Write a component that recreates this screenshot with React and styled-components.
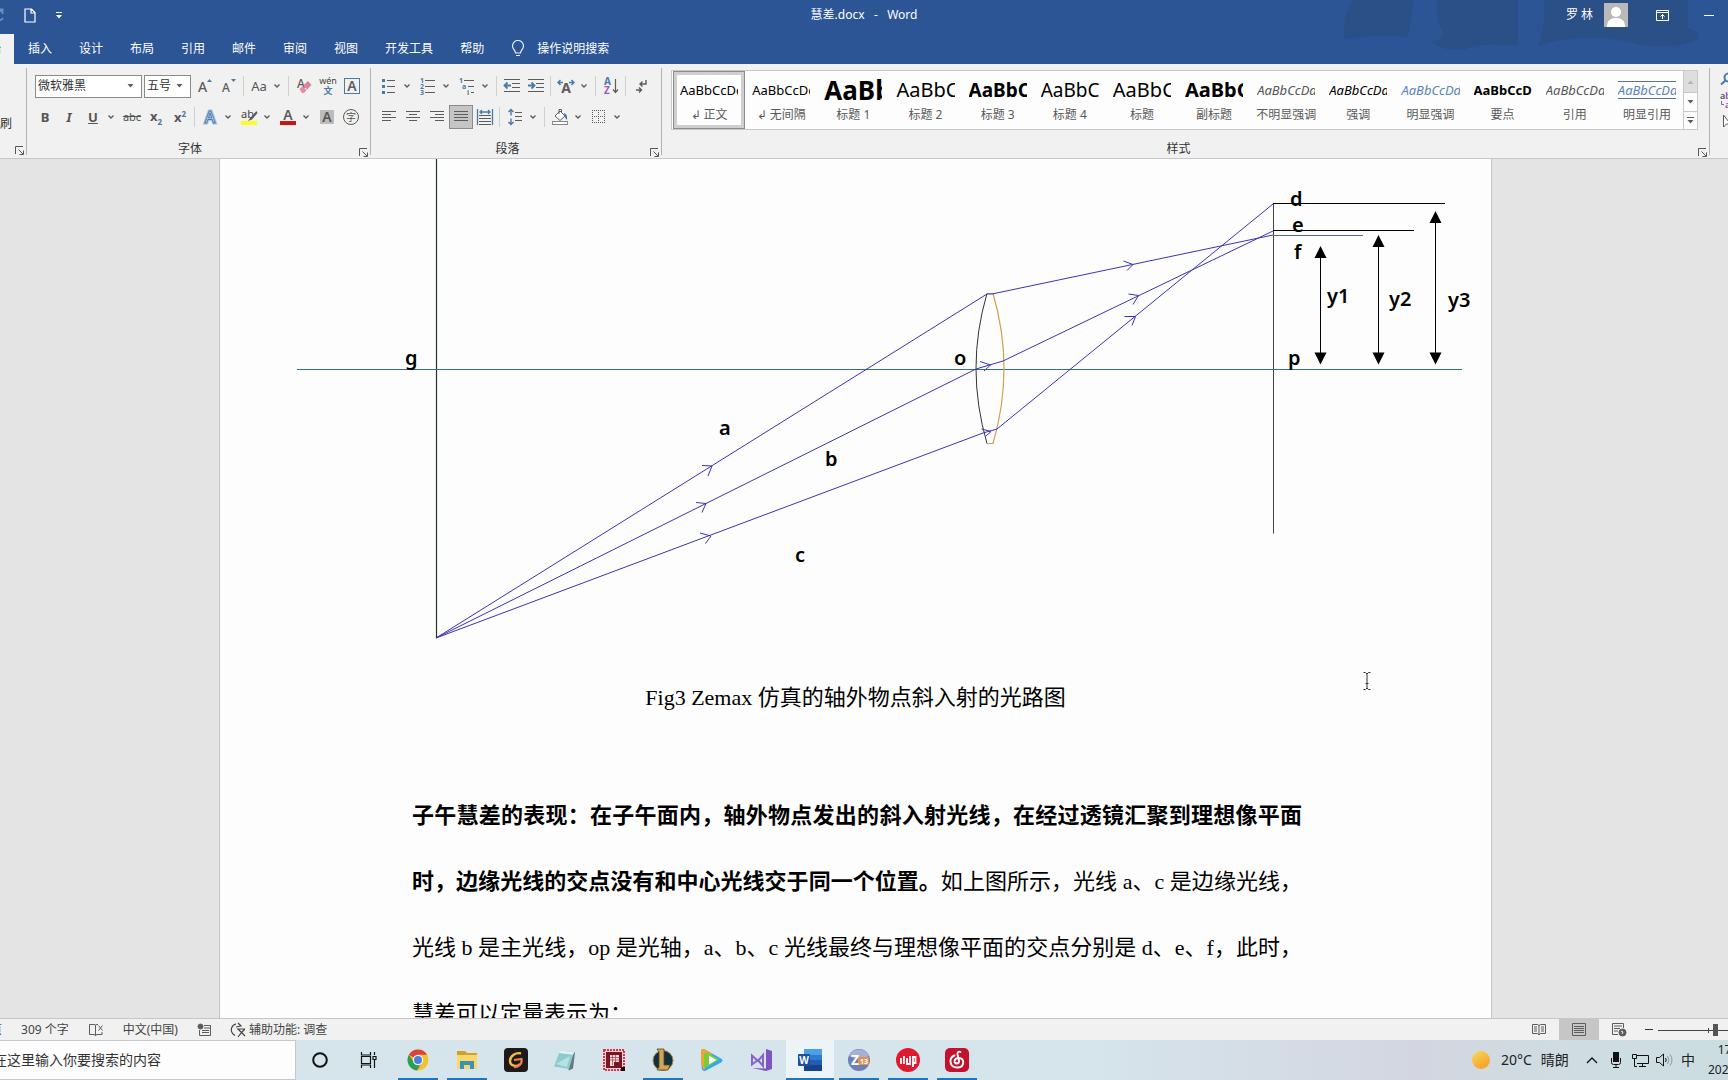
import styled, { createGlobalStyle } from 'styled-components'

const blue = '#4a7ba6'
const grey = '#5c5c5c'

const tabs = ['插入', '设计', '布局', '引用', '邮件', '审阅', '视图', '开发工具', '帮助']

const wordStyles = [
  { name: '↲ 正文', sample: 'AaBbCcDd', size: 13, active: true },
  { name: '↲ 无间隔', sample: 'AaBbCcDd', size: 13 },
  { name: '标题 1', sample: 'AaBbC', size: 26, bold: true },
  { name: '标题 2', sample: 'AaBbCc', size: 20 },
  { name: '标题 3', sample: 'AaBbCc', size: 19, bold: true },
  { name: '标题 4', sample: 'AaBbC', size: 19 },
  { name: '标题', sample: 'AaBbCc', size: 20 },
  { name: '副标题', sample: 'AaBbCc', size: 20, bold: true },
  { name: '不明显强调', sample: 'AaBbCcDd', size: 13, italic: true, color: '#555' },
  { name: '强调', sample: 'AaBbCcDd', size: 13, italic: true },
  { name: '明显强调', sample: 'AaBbCcDd', size: 13, italic: true, color: '#5b84b5' },
  { name: '要点', sample: 'AaBbCcD', size: 13, bold: true },
  { name: '引用', sample: 'AaBbCcDd', size: 13, italic: true, color: '#555' },
  { name: '明显引用', sample: 'AaBbCcDd', size: 13, italic: true, color: '#5b84b5', ruled: true },
]

/////  Icons  /////

const Chevron = () => (
  <svg width="8" height="6" viewBox="0 0 8 6" fill="none" stroke={grey} strokeWidth="1.4">
    <path d="M1.5 1.5 4 4l2.500-2.500" />
  </svg>
)

const Triangle = ({ color = grey, up }) => (
  <svg width="7" height="4" viewBox="0 0 7 4" fill={color}>
    <path d={up ? 'M.5 4h6L3.500.5z' : 'M.5 0h6L3.500 3.500z'} />
  </svg>
)

const Launcher = () => (
  <svg width="9" height="9" viewBox="0 0 9 9" fill="none" stroke="#555">
    <path d="M.5 8V.5H8M3.500 3.500 8 8M8.500 4.500v4h-4" />
  </svg>
)

const Lines = ({ rows, x = 0 }) => (
  <svg width="16" height="14" viewBox="0 0 16 14" stroke={grey}>
    {rows.map(([a, b], i) => (
      <path key={i} d={`M${a + x} ${i * 3 + 1.500}H${b + x}`} />
    ))}
  </svg>
)

const GrowFont = ({ down }) => (
  <svg width="18" height="18" viewBox="0 0 18 18">
    <text x="2" y="15" fontSize={down ? 12 : 14} fontWeight="500" fill={grey}>A</text>
    {down ? <path d="M11 2h5l-2.500 3z" fill={blue} /> : <path d="M11 5h5l-2.500-3z" fill={blue} />}
  </svg>
)

const Eraser = () => (
  <svg width="18" height="18" viewBox="0 0 18 18">
    <text x="2" y="11" fontSize="12" fontWeight="500" fill={grey}>A</text>
    <path d="m4.500 12 3-2.700 4 4-2.500 2.700H7z" fill="#e58ba0" />
    <path d="m8.500 8.300 4.500-4.300 3.500 4-4.500 4.500z" fill="#e07f97" />
  </svg>
)

const Wen = () => (
  <svg width="20" height="20" viewBox="0 0 20 20" textAnchor="middle">
    <text x="10" y="8" fontSize="9" fill="#444">wén</text>
    <text x="10" y="18" fontSize="9" fontWeight="700" fill={blue}>文</text>
  </svg>
)

const BoxedA = () => (
  <svg width="18" height="18" viewBox="0 0 18 18">
    <rect x="1.500" y="1.500" width="15" height="15" fill="none" stroke={blue} />
    <text x="9" y="14" fontSize="14" fontWeight="600" textAnchor="middle" fill={grey}>A</text>
  </svg>
)

const ShadedA = () => (
  <svg width="18" height="18" viewBox="0 0 18 18">
    <rect x="2" y="2" width="14" height="14" fill="#bcbcbc" />
    <text x="9" y="14" fontSize="14" fontWeight="600" textAnchor="middle" fill="#555">A</text>
  </svg>
)

const CircledChar = () => (
  <svg width="18" height="18" viewBox="0 0 18 18">
    <circle cx="9" cy="9" r="7.500" fill="none" stroke={grey} />
    <text x="9" y="13" fontSize="10" textAnchor="middle" fill="#555">字</text>
  </svg>
)

const TextEffect = () => (
  <svg width="18" height="18" viewBox="0 0 18 18">
    <text x="9" y="15" fontSize="16" fontWeight="500" textAnchor="middle" fill="#fff" stroke="#a9c9ea" strokeWidth="3">A</text>
    <text x="9" y="15" fontSize="16" fontWeight="500" textAnchor="middle" fill="#fff" stroke={blue} strokeWidth="1">A</text>
  </svg>
)

const Highlight = () => (
  <svg width="18" height="18" viewBox="0 0 18 18">
    <text x="1" y="10" fontSize="11" fill="#444">ab</text>
    <path d="m16.500 3-6 6.500-2.500 3.500 4-1.500 5.500-6.500z" fill={grey} />
    <path d="M1 13h16v4H1z" fill="#fdfd20" />
  </svg>
)

const FontColor = () => (
  <svg width="18" height="18" viewBox="0 0 18 18">
    <text x="9" y="12" fontSize="14" fontWeight="600" textAnchor="middle" fill={grey}>A</text>
    <path d="M1 13h16v4H1z" fill="#c4161c" />
  </svg>
)

const Bullets = () => (
  <svg width="16" height="16" viewBox="0 0 16 16">
    <path d="M6 2.500h8M6 8.500h8M6 14.500h8" stroke={grey} />
    <path d="M1 1h3v3H1zM1 7h3v3H1zM1 13h3v3H1z" fill={blue} />
  </svg>
)

const Numbers = () => (
  <svg width="18" height="18" viewBox="0 0 18 18">
    <path d="M6 3.500h10M6 9.500h10M6 15.500h10" stroke={grey} />
    <g fontSize="7" fontWeight="700" fill={blue}>
      <text x="1" y="6">1</text>
      <text x="1" y="12">2</text>
      <text x="1" y="18">3</text>
    </g>
  </svg>
)

const Multilevel = () => (
  <svg width="18" height="18" viewBox="0 0 18 18">
    <path d="M6 3.500h10M10 9.500h6M13 15.500h3" stroke={grey} />
    <g fontSize="7" fontWeight="700" fill={blue}>
      <text x="1" y="6">1</text>
      <text x="4" y="12">a</text>
      <text x="9" y="18">i</text>
    </g>
  </svg>
)

const Indent = ({ right }) => (
  <svg width="18" height="16" viewBox="0 0 18 16" fill="none">
    <path d="M1 1.500h16M9 5.500h8M9 9.500h8M1 13.500h16" stroke={grey} />
    <path d={right ? 'M1 7.500h6M4.500 4.500l3 3-3 3' : 'M8 7.500H2M4.500 4.500l-3 3 3 3'} stroke={blue} strokeWidth="1.800" />
  </svg>
)

const AsianLayout = () => (
  <svg width="18" height="18" viewBox="0 0 18 18" fill="none">
    <text x="9" y="16" fontSize="14" fontWeight="700" textAnchor="middle" fill={grey}>A</text>
    <path d="M1 5.500h5M3.500 3 1 5.500 3.500 8M17 5.500h-5M14.500 3 17 5.500 14.500 8" stroke={blue} strokeWidth="1.500" />
  </svg>
)

const Sort = () => (
  <svg width="16" height="18" viewBox="0 0 16 18" fill="none">
    <g fontSize="10" fontWeight="700">
      <text x="1" y="8" fill={blue}>A</text>
      <text x="1" y="17" fill="#9a5bb0">Z</text>
    </g>
    <path d="M12.500 2v13M10 12.500l2.500 3 2.500-3" stroke={grey} strokeWidth="1.200" />
  </svg>
)

const Marks = () => (
  <svg width="14" height="16" viewBox="0 0 14 16" fill="none" stroke={grey} strokeWidth="1.400">
    <path d="M12 2v4H6M8.500 3.500 6 6l2.500 2.500M2 12h5M5 9.500 7.500 12 5 14.500" />
  </svg>
)

const Distribute = () => (
  <svg width="18" height="18" viewBox="0 0 18 18" fill="none">
    <path d="M3 7.500h12M3 10.500h12M3 13.500h12M3 16.500h12" stroke={grey} />
    <path d="M1.500 1v16M16.500 1v16M4 4h10M6 2 4 4l2 2M12 2l2 2-2 2" stroke={blue} strokeWidth="1.300" />
  </svg>
)

const LineSpacing = () => (
  <svg width="16" height="18" viewBox="0 0 16 18" fill="none">
    <path d="M8 4.500h7M8 8.500h7M8 12.500h7" stroke={grey} />
    <path d="M4 1.500v6M1.500 4 4 1.500 6.500 4M4 10.500v6M1.500 14 4 16.500 6.500 14" stroke={blue} strokeWidth="1.400" />
  </svg>
)

const Bucket = () => (
  <svg width="18" height="18" viewBox="0 0 18 18" fill="none">
    <path d="m4 8 5-5 5 5-5 4.500zM8 6V1.500h2.500V5" stroke={grey} fill="#fff" />
    <path d="M13 5c3 1 3.500 4 3 7-1.500-1-2-3-2.500-4z" fill={blue} />
    <rect x="1.500" y="13.500" width="15" height="3" stroke="#888" fill="#fff" />
  </svg>
)

const Borders = () => (
  <svg width="14" height="14" viewBox="0 0 14 14" fill="none" stroke={grey} strokeDasharray="1 1">
    <path d="M0 .5h14M0 6.500h14M0 12.500h14M.5 0v14M6.500 0v14M12.500 0v14" />
  </svg>
)

const Bulb = () => (
  <svg width="14" height="18" viewBox="0 0 14 18" fill="none" stroke="#e8f1f8" strokeWidth="1.200">
    <path d="M4.500 13c0-3-3-3.500-3-7a5.500 5.500 0 0 1 11 0c0 3.500-3 4-3 7zM5 15.500h4" />
  </svg>
)

/////  Optical diagram  /////

const rays = [
  'M436 638 987 294h5L1273 235',
  'M436 638 976 369l27-8L1273 231',
  'M436 638 983 433l14-4L1273 204',
]

const arrowHeads = [
  'M702 465.500 712 466l-4 10',
  'M696 502.500 706 503.500l-4 9',
  'M700 533l11 3-5.500 7.500',
  'M980 361.500 990.500 365 984 371',
  'M981.500 429 991 431.500 986 436',
  'M1123.500 261 1133 264.500 1127 270.500',
  'M1128.500 294 1138.500 295.500 1133 304.500',
  'M1124.500 316.500h11l-3.500 9',
]

const labels = [
  ['g', 405, 365], ['a', 719, 435], ['b', 825, 466], ['c', 795, 562], ['o', 954, 365],
  ['d', 1290, 206], ['e', 1292, 232], ['f', 1294, 259], ['p', 1288, 365],
  ['y1', 1327, 303], ['y2', 1389, 306], ['y3', 1448, 307],
]

const heights = [[1320.500, 246], [1378.500, 235], [1435.500, 211]]

const Diagram = () => (
  <DiagramSvg viewBox="220 159 1271 506" role="img" aria-label="光路图">
    <g fill="none">
      <path d="M436.500 159V638" stroke="#263238" strokeWidth="1.200" />
      <path d="M1273.500 203.500V533.500" stroke="#444" />
      <path d="M297 369.500H1462" stroke="#3c6e80" />
      <path d="M1273 203.500h172M1273 230.500h141" stroke="#000" strokeWidth="1.200" />
      <path d="M1273 235.500h90" stroke="#566b8c" />
      <path d="M987 293.500Q965 368 987 443.500" stroke="#333" />
      <path d="M987 293.500h6Q1015 368 993 443.500h-6" stroke="#c9a24e" strokeWidth="1.200" />
      <g stroke="#3a34b4">
        {rays.map(d => <path key={d} d={d} />)}
        {arrowHeads.map(d => <path key={d} d={d} />)}
      </g>
    </g>
    {heights.map(([x, top]) => (
      <g key={x}>
        <path d={`M${x} ${top + 8}V356`} stroke="#000" />
        <path d={`M${x} ${top}l6 12h-12zM${x} 364.500l6-12h-12z`} />
      </g>
    ))}
    {labels.map(([text, x, y]) => <text key={text} x={x} y={y}>{text}</text>)}
  </DiagramSvg>
)

/////  Taskbar icons  /////

const AppIcon = ({ children }) => (
  <svg width="24" height="24" viewBox="0 0 24 24">{children}</svg>
)

const apps = [
  { label: 'Cortana', icon: <circle cx="12" cy="12" r="6.800" fill="none" stroke="#111" strokeWidth="2" /> },
  {
    label: '任务视图',
    icon: <path d="M4.500 4v3h9V4M4.500 20v-3h9v3M4.500 8.500h9v7h-9zM17.500 4v3M17.500 12v8M16 8.500h3v3h-3z" fill="none" stroke="#111" strokeWidth="1.200" />,
  },
  {
    label: 'Chrome',
    open: true,
    icon: (
      <>
        <circle cx="12" cy="12" r="10.500" fill="#f2c230" />
        <path d="M12 12 2.900 6.800A10.500 10.500 0 0 1 21.100 6.800H12z" fill="#d9453a" />
        <path d="M2.900 6.800A10.500 10.500 0 0 0 11 22.500L16 14 8 14z" fill="#2f9c53" />
        <circle cx="12" cy="12" r="5.200" fill="#f3f6f4" />
        <circle cx="12" cy="12" r="4" fill="#4a80d8" />
      </>
    ),
  },
  {
    label: '文件资源管理器',
    open: true,
    icon: (
      <>
        <path d="M2 3h8l2 2h10v4H2z" fill="#d49e2a" />
        <path d="M2 7h20v14H2z" fill="#fbd768" />
        <path d="M5 13h14v8h-4v-4H9v4H5z" fill="#3a92b8" />
      </>
    ),
  },
  {
    label: 'G',
    icon: (
      <>
        <rect width="24" height="24" rx="4" fill="#1e1a1b" />
        <path d="M17 5.500C12 4 6 8 6 13c0 5 7 6.500 10 3" fill="none" stroke="#f3bf45" strokeWidth="2.400" />
        <path d="M10 12l7.500-1c1 5-3 8.500-7.500 8" fill="none" stroke="#ee7f49" strokeWidth="2.200" />
      </>
    ),
  },
  {
    label: '记事本',
    icon: (
      <>
        <path d="m7 3 15 1.500-2 16-4 2z" fill="#66777d" />
        <path d="M7 2.500 21 4l-5 17L1 18.500z" fill="#8ccbd0" />
        <path d="M7 2.500 21 4l-.8 2.800L5.800 5z" fill="#e2f1f2" />
        <path d="m3 16 14-8-3 11z" fill="#b9e0e2" />
      </>
    ),
  },
  {
    label: 'P',
    icon: (
      <>
        <path d="M1 1h22v22H1z" fill="#f5d6d9" />
        <path d="M2 2h20v20H2z" fill="none" stroke="#d23a4c" strokeWidth="2" strokeDasharray="2 1" />
        <path d="M4 4h16v16H4z" fill="#7d1521" />
        <path d="M8 7h9v7h-5v4H8z" fill="#f6dcdd" />
        <path d="M8 9.500h9M8 12h9M10.500 7v10M13.500 7v7" stroke="#a83a45" strokeWidth=".7" />
        <path d="M19 19h4v4h-4z" fill="#240508" />
      </>
    ),
  },
  {
    label: '英雄联盟',
    open: true,
    icon: (
      <>
        <circle cx="12" cy="12.500" r="10" fill="#12303d" stroke="#a68a4a" />
        <path d="M6 1h7v16h6l-2 5H6l2-3V4z" fill="#cda755" stroke="#5a4420" strokeWidth=".8" />
      </>
    ),
  },
  {
    label: '腾讯视频',
    icon: (
      <>
        <path d="M1 4c0-3 2-3.500 4-2.500l16 9c2 1 2 3 0 4l-15 8C3 24 2 22 1.700 20z" fill="#36a7ee" />
        <path d="M1 4c0-3 2-3.500 4-2.500l7 4L4 22C2 21 1 12 1 4z" fill="#f5a32f" />
        <path d="M4 7c0-2 2-3 4-2l11 6.500L7 19c-2 1-3-1-3-3z" fill="#73cf38" />
        <path d="m9 7.500 7.500 4.500L9 16.500z" fill="#fff" />
      </>
    ),
  },
  {
    label: 'Visual Studio',
    icon: (
      <>
        <path d="m17 1 6 2v18l-6 2-14-3 14 .5z" fill="#7d55c0" />
        <path d="M3 7.500 9 13l5-6v11l-5-6-6 4.500z" fill="none" stroke="#8a63c9" strokeWidth="2" />
      </>
    ),
  },
  {
    label: 'Word',
    open: true,
    active: true,
    icon: (
      <>
        <path d="M6 1h18v6H6z" fill="#4ba0e8" />
        <path d="M6 7h18v5H6z" fill="#2f7bd0" />
        <path d="M6 12h18v5H6z" fill="#1f5fb5" />
        <path d="M6 17h18v6H6z" fill="#17438c" />
        <rect y="6" width="12" height="12" rx="1" fill="#1c4f9e" />
        <text x="6" y="16" fontSize="10" fontWeight="700" fill="#fff" textAnchor="middle">W</text>
      </>
    ),
  },
  {
    label: 'Zemax',
    open: true,
    icon: (
      <>
        <circle cx="12" cy="12" r="11" fill="#6e7fb8" />
        <path d="M2 8a11 11 0 0 1 20 0c-6 3-14 3-20 0z" fill="#a4b2d8" />
        <path d="M11 9h11v8H11z" fill="#e2934f" />
        <text x="8" y="17" fontSize="14" fontWeight="700" fill="#fff" textAnchor="middle">Z</text>
        <text x="17" y="16" fontSize="7" fontWeight="700" fill="#fff" textAnchor="middle">13</text>
      </>
    ),
  },
  {
    label: '录屏',
    open: true,
    icon: (
      <>
        <circle cx="12" cy="12" r="12" fill="#df1930" />
        <path d="M5 10v6M8 8v8M11 10v6h3v-8M17 8v11M17 9h2.500v6H17" fill="none" stroke="#fff" strokeWidth="1.800" />
      </>
    ),
  },
  {
    label: '网易云音乐',
    open: true,
    icon: (
      <>
        <rect width="24" height="24" rx="5" fill="#c4122c" />
        <path d="M15.500 4c-2-1-3.500.5-3 2.500l1.500 6c.5 2-1 3-2.200 3-3.300 0-3.300-5.500 2.200-5.500 6 0 5.500 9-1 9.500C4 20 3.500 10 9.500 7.500" fill="none" stroke="#fff" strokeWidth="1.900" strokeLinecap="round" />
      </>
    ),
  },
]

/////  Parts  /////

const Tool = ({ label, menu, pressed, children }) => (
  <ToolWrap $menu={menu}>
    <ToolButton aria-label={label} $pressed={pressed}>{children}</ToolButton>
    {menu && <MenuButton aria-label={`${label}选项`}><Chevron /></MenuButton>}
  </ToolWrap>
)

const Combo = ({ label, value, width }) => (
  <ComboBox $width={width}>
    <select aria-label={label} defaultValue={value}>
      <option>{value}</option>
    </select>
    <Triangle />
  </ComboBox>
)

const GroupFooter = ({ title }) => (
  <Footer>
    <span>{title}</span>
    <PlainButton aria-label={`${title}设置`}><Launcher /></PlainButton>
  </Footer>
)

function TitleBar() {
  return (
    <TitleRow>
      <Watermark viewBox="0 0 370 60" aria-hidden="true">
        <path d="M10 0h60l-6 37q-30-3-64 2Q-2 14 10 0zM94 0h80v46q-40-4-52 3-20 4-36-8 12 0 14-8Q90 20 94 0zM200 0h144v28q14 4 10 12-30 12-70 2-50-10-90 4 8-16 6-46z" fill="#2b4d80" />
      </Watermark>
      <QuickAccess>
        <PlainButton aria-label="撤消">
          <svg width="14" height="14" viewBox="0 0 14 14" fill="none" stroke="#6f8fbd" strokeWidth="1.800">
            <path d="M8 1.500h4.500V6M12 2c-3 2-8 4-6 8 1 3 6 3 7 0" />
          </svg>
        </PlainButton>
        <PlainButton aria-label="新建">
          <svg width="12" height="15" viewBox="0 0 12 15" fill="none" stroke="#fff" strokeWidth="1.200">
            <path d="M1 1h6.500L11 4.500V14H1zM7 1v4h4" />
          </svg>
        </PlainButton>
        <PlainButton aria-label="自定义快速访问工具栏">
          <svg width="6" height="7" viewBox="0 0 6 7" fill="#fff"><path d="M0 0h6v1H0zM0 3h6L3 6.500z" /></svg>
        </PlainButton>
      </QuickAccess>
      <DocTitle>慧差.docx&nbsp;&nbsp; -&nbsp;&nbsp; Word</DocTitle>
      <WindowTools>
        <UserButton>
          罗 林
          <svg width="24" height="24" viewBox="0 0 24 24">
            <path d="M0 0h24v24H0z" fill="#b9b9b9" />
            <circle cx="12" cy="9" r="5" fill="#fff" />
            <path d="M3 24c0-6 3-9 9-9s9 3 9 9z" fill="#fff" />
          </svg>
        </UserButton>
        <PlainButton aria-label="功能区显示选项">
          <svg width="13" height="11" viewBox="0 0 13 11" fill="none" stroke="#fff">
            <path d="M.5.5h12v10H.5zM.5 2.500h12M6.500 9V4.500M4.500 6.500l2-2 2 2" />
          </svg>
        </PlainButton>
        <PlainButton aria-label="最小化">
          <svg width="10" height="1" viewBox="0 0 10 1"><path d="M0 0h10v1H0z" fill="#fff" /></svg>
        </PlainButton>
      </WindowTools>
    </TitleRow>
  )
}

function Ribbon() {
  return (
    <RibbonBar>
      <ClipboardGroup>
        <FormatPainter>格式刷</FormatPainter>
        <GroupFooter title="" />
      </ClipboardGroup>

      <Group>
        <FontRow>
          <Combo label="字体" value="微软雅黑" width={107} />
          <Combo label="字号" value="五号" width={47} />
          <Tool label="增大字号"><GrowFont /></Tool>
          <Tool label="减小字号"><GrowFont down /></Tool>
          <Separator />
          <Tool label="更改大小写" menu><Glyph $size={13}>Aa</Glyph></Tool>
          <Separator />
          <Tool label="清除格式"><Eraser /></Tool>
          <Tool label="拼音指南"><Wen /></Tool>
          <Tool label="字符边框"><BoxedA /></Tool>
        </FontRow>
        <ToolRow>
          <Tool label="加粗"><Glyph $bold>B</Glyph></Tool>
          <Tool label="倾斜"><Glyph as="i" $bold>I</Glyph></Tool>
          <Tool label="下划线" menu><Glyph as="u" $bold>U</Glyph></Tool>
          <Tool label="删除线"><Glyph as="s" $size={11}>abc</Glyph></Tool>
          <Tool label="下标"><Glyph $bold>x<sub>2</sub></Glyph></Tool>
          <Tool label="上标"><Glyph $bold>x<sup>2</sup></Glyph></Tool>
          <Separator />
          <Tool label="文本效果" menu><TextEffect /></Tool>
          <Tool label="突出显示" menu><Highlight /></Tool>
          <Tool label="字体颜色" menu><FontColor /></Tool>
          <Tool label="字符底纹"><ShadedA /></Tool>
          <Tool label="带圈字符"><CircledChar /></Tool>
        </ToolRow>
        <GroupFooter title="字体" />
      </Group>

      <ParagraphGroup>
        <ToolRow>
          <Tool label="项目符号" menu><Bullets /></Tool>
          <Tool label="编号" menu><Numbers /></Tool>
          <Tool label="多级列表" menu><Multilevel /></Tool>
          <Separator />
          <Tool label="减少缩进量"><Indent /></Tool>
          <Tool label="增加缩进量"><Indent right /></Tool>
          <Separator />
          <Tool label="中文版式" menu><AsianLayout /></Tool>
          <Separator />
          <Tool label="排序"><Sort /></Tool>
          <Separator />
          <Tool label="显示编辑标记"><Marks /></Tool>
        </ToolRow>
        <ToolRow>
          <Tool label="左对齐"><Lines rows={[[1, 15], [1, 10], [1, 15], [1, 10]]} /></Tool>
          <Tool label="居中"><Lines rows={[[1, 15], [4, 12], [1, 15], [4, 12]]} /></Tool>
          <Tool label="右对齐"><Lines rows={[[1, 15], [6, 15], [1, 15], [6, 15]]} /></Tool>
          <Tool label="两端对齐" pressed><Lines rows={[[1, 15], [1, 15], [1, 15], [1, 15]]} /></Tool>
          <Tool label="分散对齐"><Distribute /></Tool>
          <Separator />
          <Tool label="行距" menu><LineSpacing /></Tool>
          <Separator />
          <Tool label="底纹" menu><Bucket /></Tool>
          <Tool label="边框" menu><Borders /></Tool>
        </ToolRow>
        <GroupFooter title="段落" />
      </ParagraphGroup>

      <StylesGroup>
        <Gallery>
          {wordStyles.map(s => (
            <StyleCard key={s.name} $active={s.active}>
              <Sample $size={s.size} $bold={s.bold} $italic={s.italic} $color={s.color}>
                <SampleText $ruled={s.ruled}>{s.sample}</SampleText>
              </Sample>
              <StyleName>{s.name}</StyleName>
            </StyleCard>
          ))}
          <GalleryScroll>
            <button aria-label="上一行" disabled><Triangle up color="#b5b5b5" /></button>
            <button aria-label="下一行"><Triangle /></button>
            <button aria-label="其他样式">
              <svg width="7" height="7" viewBox="0 0 7 7" fill={grey}><path d="M0 0h7v1H0zM.5 3h6l-3 3.500z" /></svg>
            </button>
          </GalleryScroll>
        </Gallery>
        <GroupFooter title="样式" />
      </StylesGroup>

      <EditingGroup>
        <PlainButton aria-label="查找">
          <svg width="14" height="14" viewBox="0 0 14 14" fill="none" stroke={blue} strokeWidth="2">
            <circle cx="8.500" cy="5.500" r="4" /><path d="m5.500 8.500-4.500 4" />
          </svg>
        </PlainButton>
        <PlainButton aria-label="替换">
          <svg width="16" height="18" viewBox="0 0 16 18" fontSize="9" fontWeight="600">
            <text x="0" y="8" fill="#555">a<tspan fill="#8d4bb0">b</tspan></text>
            <text x="5" y="17" fill="#8d4bb0">ac</text>
            <path d="M1.500 10v3.500H4" fill="none" stroke={blue} />
          </svg>
        </PlainButton>
        <PlainButton aria-label="选择">
          <svg width="12" height="16" viewBox="0 0 12 16" fill="#fff" stroke={grey}><path d="M3.500 1v12l3-3h4z" /></svg>
        </PlainButton>
      </EditingGroup>
    </RibbonBar>
  )
}

function Document() {
  return (
    <Workspace>
      <Page>
        <Diagram />
        <Caption>Fig3 Zemax 仿真的轴外物点斜入射的光路图</Caption>
        <Paragraph>
          <b>子午慧差的表现：在子午面内，轴外物点发出的斜入射光线，在经过透镜汇聚到理想像平面时，边缘光线的交点没有和中心光线交于同一个位置。</b>
          如上图所示，光线 a、c 是边缘光线，光线 b 是主光线，op 是光轴，a、b、c 光线最终与理想像平面的交点分别是 d、e、f，此时，慧差可以定量表示为：
        </Paragraph>
        <TextCursor viewBox="0 0 8 18" fill="none" stroke="#333" aria-hidden="true">
          <path d="M.5.500h2L4 2 5.500.500h2M4 2v14M.5 17.500h2L4 16l1.500 1.500h2M2.500 11.500h3" />
        </TextCursor>
      </Page>
    </Workspace>
  )
}

function StatusBar() {
  return (
    <Status>
      <StatusLeft>
        <StatusPage>页</StatusPage>
        <span>309 个字</span>
        <svg width="16" height="14" viewBox="0 0 16 14" fill="none" stroke={grey}>
          <path d="M7.500 2v10.500L6 11.500H1.500v-10H6zM7.500 2 9 1.500h1M7.500 12.500l1.500-1h5V9M10.500 2.500l4 5M14.500 2.500l-4 5" />
        </svg>
        <span>中文(中国)</span>
        <svg width="14" height="14" viewBox="0 0 14 14" fill="none" stroke={grey}>
          <path d="M7 2.500h6.500v10h-11V7M7 5h6M5 7.500h7M5 9.500h7" /><circle cx="3.500" cy="3.500" r="2.500" fill={grey} />
        </svg>
        <Accessibility>
          <svg width="17" height="16" viewBox="0 0 17 16" fill="none" stroke="#444" strokeWidth="1.200">
            <path d="M6 2A6 6 0 0 0 3 12l2 1.500M8 1l3 3-5 1M8 7l7 7M15 7l-3 3-4 5M7 7h8" />
          </svg>
          辅助功能: 调查
        </Accessibility>
      </StatusLeft>
      <StatusRight>
        <ViewButton aria-label="阅读视图">
          <svg width="14" height="13" viewBox="0 0 14 13" fill="none" stroke={grey}>
            <path d="M.5 1.500h5l1.500 1 1.500-1h5v9h-5l-1.500 1.500-1.500-1.500h-5zM7 2v10M2 4h3M2 6h3M2 8h3M9 4h3M9 6h3M9 8h3" />
          </svg>
        </ViewButton>
        <ViewButton aria-label="页面视图" $active>
          <svg width="14" height="13" viewBox="0 0 14 13" fill="none" stroke={grey}>
            <path d="M.5.500h13v12H.5zM2 3.500h10M2 5.500h10M2 7.500h10M2 9.500h10" />
          </svg>
        </ViewButton>
        <ViewButton aria-label="Web 版式视图">
          <svg width="15" height="14" viewBox="0 0 15 14" fill="none" stroke={grey}>
            <path d="M6 11.500H.5V.5h11V5M2 3h8M2 5.500h6M2 8h4" /><circle cx="10.500" cy="9.500" r="3.500" fill={grey} /><path d="m9 8 2 1-1 2" stroke="#f1f1f1" />
          </svg>
        </ViewButton>
        <ZoomOut aria-label="缩小">
          <svg width="8" height="1" viewBox="0 0 8 1"><path d="M0 0h8v1H0z" fill="#333" /></svg>
        </ZoomOut>
        <ZoomSlider type="range" aria-label="缩放" min="0" max="100" defaultValue="58" />
      </StatusRight>
    </Status>
  )
}

function Taskbar() {
  return (
    <TaskRow>
      <Search aria-label="搜索" placeholder="在这里输入你要搜索的内容" />
      <Apps>
        {apps.map(app => (
          <AppButton key={app.label} aria-label={app.label} $open={app.open} $active={app.active}>
            <AppIcon>{app.icon}</AppIcon>
          </AppButton>
        ))}
      </Apps>
      <Tray>
        <Sun />
        <Weather><span>20°C</span><span>晴朗</span></Weather>
        <TrayButton aria-label="显示隐藏的图标">
          <svg width="12" height="8" viewBox="0 0 12 8" fill="none" stroke="#111" strokeWidth="1.300"><path d="m1 7 5-5 5 5" /></svg>
        </TrayButton>
        <TrayButton aria-label="麦克风">
          <svg width="12" height="16" viewBox="0 0 12 16" fill="#111">
            <rect x="3" width="6" height="10" /><path d="M1.500 6v4.500q0 2 2 2h5q2 0 2-2V6M6 12.500V15M3 15.500h6" fill="none" stroke="#111" />
          </svg>
        </TrayButton>
        <TrayButton aria-label="网络">
          <svg width="17" height="15" viewBox="0 0 17 15" fill="none" stroke="#111">
            <path d="M5 2.500h11.500v8H5M.5 1.500h4v4h-4zM2.500 5.500v8H5M10.500 10.500v3M7 13.500h7" />
          </svg>
        </TrayButton>
        <TrayButton aria-label="音量">
          <svg width="17" height="14" viewBox="0 0 17 14" fill="none" stroke="#111">
            <path d="M.5 4.500h3l4-3.500v12l-4-3.500h-3zM9.500 5q1.500 2 0 4" /><path d="M11.500 3q3 4 0 8M14 1.500q4 5.500 0 11" stroke="#8d979c" />
          </svg>
        </TrayButton>
        <TrayButton>中</TrayButton>
        <Clock><span>17:30</span><span>2022/5/2</span></Clock>
      </Tray>
    </TaskRow>
  )
}

export default function App() {
  return (
    <Screen>
      <GlobalStyle />
      <TitleBar />
      <TabRow>
        <ActiveTab>开始</ActiveTab>
        <TabList>
          {tabs.map(tab => <PlainButton key={tab}>{tab}</PlainButton>)}
          <TellMe><Bulb />操作说明搜索</TellMe>
        </TabList>
      </TabRow>
      <Ribbon />
      <Document />
      <StatusBar />
      <Taskbar />
    </Screen>
  )
}

/////  Style  /////

const GlobalStyle = createGlobalStyle`
  * {
    box-sizing: border-box;
  }

  body {
    margin: 0;
    font-family: "Noto Sans", "Noto Sans CJK SC", sans-serif;
    font-size: 12px;
    line-height: 16px;
    color: #333;
  }

  button, input, select {
    font: inherit;
    color: inherit;
  }

  svg {
    flex: none;
    display: block;
  }
`

const Screen = styled.div`
  display: flex;
  flex-direction: column;
  height: 100vh;
  overflow: hidden;
`

const PlainButton = styled.button`
  display: flex;
  align-items: center;
  padding: 0;
  border: none;
  background: none;
  white-space: nowrap;
  cursor: pointer;
`

const TitleRow = styled.header`
  position: relative;
  display: grid;
  grid-template-columns: 1fr auto 1fr;
  align-items: center;
  flex: none;
  height: 34px;
  padding-bottom: 4px;
  background: #2c5596;
  color: #fff;
`

const Watermark = styled.svg`
  position: absolute;
  top: 0;
  right: 14px;
  width: 370px;
  height: 60px;
  opacity: 0.6;
  pointer-events: none;
`

const QuickAccess = styled.div`
  display: flex;
  align-items: center;
  gap: 20px;
  margin-left: -10px;
`

const DocTitle = styled.h1`
  margin: 0;
  font-size: 12px;
  font-weight: 400;
`

const WindowTools = styled.div`
  position: relative;
  display: flex;
  justify-content: flex-end;
  align-items: center;
  gap: 35px;
  padding-right: 14px;
`

const UserButton = styled(PlainButton)`
  gap: 11px;
  margin-right: -7px;
`

const TabRow = styled.nav`
  display: flex;
  flex: none;
  height: 30px;
  background: #2c5596;
  color: #fff;
`

const ActiveTab = styled(PlainButton)`
  justify-content: flex-end;
  width: 14px;
  padding-right: 13px;
  overflow: hidden;
  background: #f1f1f1;
  color: #2c5596;
`

const TabList = styled.div`
  position: relative;
  display: flex;
  gap: 27px;
  padding: 0 14px;
`

const TellMe = styled(PlainButton)`
  gap: 12px;
`

const RibbonBar = styled.section`
  display: flex;
  flex: none;
  height: 95px;
  padding: 4px 0 3px;
  overflow: hidden;
  border-bottom: 1px solid #c8c8c8;
  background: #f1f1f1;
`

const Group = styled.div`
  display: flex;
  flex-direction: column;
  gap: 7px;
  flex: none;
  padding: 6px 6px 0;
  border-right: 1px solid #b4b4b4;
`

const ClipboardGroup = styled(Group)`
  width: 27px;
  padding: 48px 0 0;
  align-items: flex-end;
`

const FormatPainter = styled(PlainButton)`
  margin-right: 14px;
`

const ParagraphGroup = styled(Group)`
  padding-right: 8px;
`

const StylesGroup = styled(Group)`
  flex: 1;
  min-width: 0;
  padding: 2px 11px 0 9px;
`

const EditingGroup = styled.div`
  display: flex;
  flex-direction: column;
  gap: 5px;
  width: 18px;
  padding: 4px 0 0 10px;
  overflow: hidden;
`

const Footer = styled.div`
  display: grid;
  grid-template-columns: 1fr 9px;
  column-gap: 6px;
  align-items: center;
  height: 14px;
  margin: auto -4px 0 -6px;
  text-align: center;

  ${ParagraphGroup} & {
    margin-right: -6px;
  }

  ${StylesGroup} & {
    margin-right: -9px;
  }

  ${ClipboardGroup} & {
    margin-right: 2px;
  }

  & button {
    align-self: end;
    height: 10px;
  }
`

const ToolRow = styled.div`
  display: flex;
  align-items: center;
  height: 24px;
`

const FontRow = styled(ToolRow)`
  padding-left: 2px;
`

const ToolWrap = styled.div`
  display: flex;
  align-items: center;
  margin-right: ${({ $menu }) => ($menu ? '3px' : '0')};
`

const ToolButton = styled(PlainButton)`
  justify-content: center;
  width: 24px;
  height: 24px;
  border: 1px solid ${({ $pressed }) => ($pressed ? '#8c8c8c' : 'transparent')};
  background: ${({ $pressed }) => ($pressed ? '#c5c5c5' : 'none')};
`

const MenuButton = styled(PlainButton)`
  justify-content: center;
  width: 12px;
  height: 24px;
`

const Separator = styled.span`
  width: 1px;
  height: 20px;
  margin: 0 3px 0 2px;
  background: #d0d0d0;
`

const Glyph = styled.span`
  font-size: ${({ $size }) => $size || 13}px;
  font-weight: ${({ $bold }) => ($bold ? 700 : 400)};
  color: #555;

  & sub, & sup {
    font-size: 8px;
    line-height: 1;
    color: ${blue};
  }
`

const ComboBox = styled.label`
  display: grid;
  grid-template-columns: 1fr 14px;
  align-items: center;
  width: ${({ $width }) => $width}px;
  height: 23px;
  margin: 0 2px 0 0;
  border: 1px solid #8a8a8a;
  background: #fff;

  & select {
    grid-area: 1 / 1 / 2 / 3;
    height: 21px;
    padding: 0 2px;
    border: none;
    background: none;
    appearance: none;
  }

  & svg {
    grid-area: 1 / 2;
    pointer-events: none;
  }
`

const Gallery = styled.div`
  display: flex;
  height: 60px;
  padding-left: 1px;
  overflow: hidden;
  border: 1px solid #c8c8c8;
  background: #fdfdfd;
`

const StyleCard = styled.button`
  display: flex;
  flex-direction: column;
  align-items: center;
  flex: 1 1 0;
  min-width: 0;
  padding: 1px 6px;
  border: 1px solid ${({ $active }) => ($active ? '#8c8c8c' : 'transparent')};
  background: none;
  box-shadow: ${({ $active }) => ($active ? 'inset 0 0 0 3px #cfcfcf' : 'none')};
`

const Sample = styled.span`
  display: flex;
  align-items: center;
  width: 100%;
  height: 34px;
  overflow: hidden;
  font-size: ${({ $size }) => $size}px;
  font-weight: ${({ $bold }) => ($bold ? 700 : 400)};
  font-style: ${({ $italic }) => ($italic ? 'italic' : 'normal')};
  color: ${({ $color }) => $color || '#000'};
`

const SampleText = styled.span`
  border: solid ${({ $ruled }) => ($ruled ? '#5a7396' : 'transparent')};
  border-width: 1px 0;
`

const StyleName = styled.span`
  white-space: nowrap;
  color: #595959;
`

const GalleryScroll = styled.div`
  display: grid;
  grid-template-rows: 21px 19px 18px;
  width: 14px;
  border-left: 1px solid #c8c8c8;

  & button {
    display: grid;
    place-items: center;
    padding: 0;
    border: none;
    background: #fdfdfd;
  }

  & button + button {
    border-top: 1px solid #c8c8c8;
  }

  & button:disabled {
    background: #dedede;
  }
`

const Workspace = styled.main`
  display: grid;
  grid-template-columns: 219px 1fr 236px;
  flex: 1;
  min-height: 0;
  overflow: hidden;
  background: #e4e4e4;
`

const Page = styled.article`
  position: relative;
  grid-column: 2;
  border: solid #c6c6c6;
  border-width: 0 1px;
  background: #fdfdfd;
  color: #000;
  font-family: "Liberation Serif", "Noto Sans CJK SC", serif;
  font-size: 22px;
  line-height: 66px;
`

const DiagramSvg = styled.svg`
  width: 100%;

  & text {
    font-family: "Noto Sans", sans-serif;
    font-size: 20px;
    font-weight: 600;
  }
`

const Caption = styled.p`
  margin: 0 0 52px;
  text-align: center;
`

const Paragraph = styled.p`
  margin: 0 189px 0 192px;
  text-align: justify;
`

const TextCursor = styled.svg`
  position: absolute;
  top: 513px;
  right: 120px;
  width: 8px;
  height: 18px;
`

const Status = styled.footer`
  display: flex;
  justify-content: space-between;
  flex: none;
  height: 22px;
  border-top: 1px solid #c6c6c6;
  background: #f1f1f1;
  color: #444;
`

const StatusLeft = styled.div`
  display: flex;
  align-items: center;
  gap: 19px;
`

const StatusPage = styled.span`
  margin-left: -10px;
`

const Accessibility = styled.span`
  display: flex;
  align-items: center;
  gap: 2px;
`

const StatusRight = styled.div`
  display: flex;
  align-items: center;
  width: 209px;
  overflow: hidden;
`

const ViewButton = styled(PlainButton)`
  flex: none;
  justify-content: center;
  width: 40px;
  height: 21px;
  background: ${({ $active }) => ($active ? '#c6c6c6' : 'none')};
`

const ZoomOut = styled(PlainButton)`
  margin-left: 6px;
`

const ZoomSlider = styled.input`
  flex: none;
  width: 100px;
  height: 12px;
  margin: 0 0 0 5px;
  appearance: none;
  background:
    linear-gradient(#444, #444) 50px 4px / 1px 5px no-repeat,
    linear-gradient(#444, #444) 0 6px / 100% 1px no-repeat;

  &::-webkit-slider-thumb {
    appearance: none;
    width: 5px;
    height: 12px;
    background: #555;
  }
`

const TaskRow = styled.footer`
  display: flex;
  flex: none;
  height: 40px;
  overflow: hidden;
  background: linear-gradient(90deg, #d6e5ec 0 62%, #d3d6e0 82%, #cfdde2 92%, #cbdde0);
  color: #222;
`

const Search = styled.input`
  width: 304px;
  margin-left: -8px;
  padding: 0;
  border: 1px solid #c2c8cb;
  background: #fdfdfd;
  font-size: 14px;

  &::placeholder {
    color: #333;
    opacity: 1;
  }
`

const Apps = styled.div`
  display: flex;
  gap: 1px;
`

const AppButton = styled(PlainButton)`
  justify-content: center;
  width: 48px;
  background:
    linear-gradient(#1b78c0, #1b78c0) bottom / ${({ $open, $active }) => ($active ? 48 : $open ? 40 : 0)}px 2px no-repeat,
    ${({ $active }) => ($active ? '#edf4f7' : 'transparent')};
`

const Tray = styled.div`
  display: flex;
  align-items: center;
  width: 256px;
  margin-left: auto;
`

const Sun = styled.span`
  flex: none;
  width: 18px;
  height: 18px;
  margin-right: 11px;
  border-radius: 50%;
  background: linear-gradient(150deg, #fbd75c, #f39a1e);
`

const Weather = styled.span`
  display: flex;
  flex: none;
  gap: 9px;
  width: 79px;
  font-size: 14px;
  white-space: nowrap;
`

const TrayButton = styled(PlainButton)`
  flex: none;
  justify-content: center;
  width: 24px;
  height: 40px;
  font-size: 14px;
`

const Clock = styled.time`
  display: flex;
  flex-direction: column;
  align-items: center;
  margin-left: 8px;
  line-height: 20px;
  white-space: nowrap;
`
